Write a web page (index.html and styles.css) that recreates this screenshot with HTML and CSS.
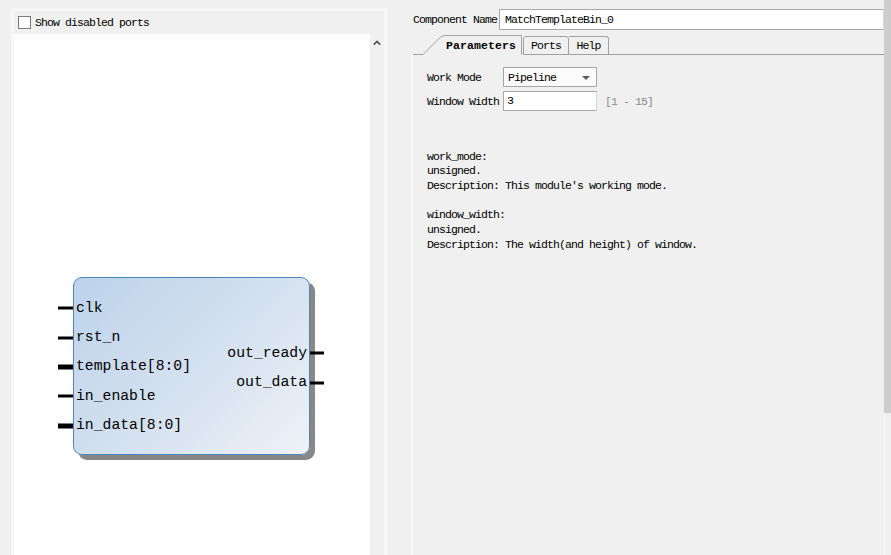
FILE: index.html
```html
<!DOCTYPE html>
<html>
<head>
<meta charset="utf-8">
<link rel="stylesheet" href="styles.css">
</head>
<body>
<div class="left-panel">
  <div class="lp-head">
    <span class="checkbox"></span>
    <span class="ui-text">Show disabled ports</span>
  </div>
  <div class="lp-body">
    <div class="canvas">
      <div class="symbol">
        <div class="ports-in">
          <div class="port pin-l">clk</div>
          <div class="port pin-l">rst_n</div>
          <div class="port pin-l bus">template[8:0]</div>
          <div class="port pin-l">in_enable</div>
          <div class="port pin-l bus">in_data[8:0]</div>
        </div>
        <div class="ports-out">
          <div class="port pin-r">out_ready</div>
          <div class="port pin-r">out_data</div>
        </div>
      </div>
    </div>
    <div class="vscroll">
      <svg class="caret" width="8" height="5" viewBox="0 0 8 5"><path d="M0.8 4.6 L4 1.4 L7.2 4.6" fill="none" stroke="#555" stroke-width="1.8"/></svg>
    </div>
  </div>
</div>

<div class="right-panel">
  <div class="name-row">
    <span class="name-label ui-text">Component Name</span>
    <div class="textbox name-box ui-text">MatchTemplateBin_0</div>
  </div>
  <div class="tabs">
    <div class="tab-lead"></div>
    <div class="tab-sel">
      <svg class="tab-shape" width="99" height="20" viewBox="0 0 99 20"><path d="M0 19.5 L16.5 3 Q18.8 0.5 22 0.5 L98.5 0.5 L98.5 19.6" fill="none" stroke="#a0a0a0" stroke-width="1"/></svg>
      <span class="tab-title">Parameters</span>
    </div>
    <div class="tab ui-text">Ports</div>
    <div class="tab ui-text">Help</div>
    <div class="tab-fill"></div>
  </div>
  <div class="pane">
    <div class="form">
      <span class="f-label ui-text">Work Mode</span>
      <div class="dropdown ui-text"><span>Pipeline</span><span class="arrow"></span></div>
      <span></span>
      <span class="f-label ui-text">Window Width</span>
      <div class="textbox small-box ui-text">3</div>
      <span class="range ui-text">[1 - 15]</span>
    </div>
    <div class="desc ui-text">work_mode:
unsigned.
Description: This module's working mode.

window_width:
unsigned.
Description: The width(and height) of window.</div>
  </div>
</div>

<div class="vbar"><div class="thumb"></div><div class="grip"></div></div>
</body>
</html>
```

FILE: styles.css
```css
html, body {
  margin: 0;
  padding: 0;
}
body {
  width: 891px;
  height: 555px;
  overflow: hidden;
  background: #f0f0f0;
  display: flex;
  color: #000;
}
.ui-text {
  font-family: "Liberation Mono", "DejaVu Sans Mono", monospace;
  font-size: 11.5px;
  letter-spacing: -0.9px;
  white-space: pre;
}

/* left panel */
.left-panel {
  margin: 8px 0 0 11px;
  width: 376px;
  box-sizing: border-box;
  border: 3px solid #f7f7f7;
  border-bottom: none;
  display: flex;
  flex-direction: column;
  background: #f0f0f0;
}
.lp-head {
  height: 23px;
  display: flex;
  align-items: center;
  padding-left: 4px;
  gap: 4px;
}
.checkbox {
  width: 13px;
  height: 13px;
  box-sizing: border-box;
  border: 1px solid #7a7a7a;
  background: #fff;
}
.lp-body {
  flex: 1;
  display: flex;
}
.canvas {
  width: 356px;
  background: #fff;
  position: relative;
}
.vscroll {
  width: 14px;
  display: flex;
  justify-content: center;
  align-items: flex-start;
  padding-top: 6px;
}

/* block symbol */
.symbol {
  position: absolute;
  left: 59px;
  top: 243px;
  width: 237px;
  height: 178px;
  box-sizing: border-box;
  border: 1px solid #4f84bb;
  border-radius: 9px;
  background: linear-gradient(135deg, #bcd3eb 0%, #d3e0ef 50%, #eef2f8 100%);
  box-shadow: 5px 5px 0 #878787;
  display: flex;
  justify-content: space-between;
}
.ports-in {
  padding-top: 15.7px;
  padding-left: 2px;
}
.ports-out {
  padding-top: 60.6px;
  padding-right: 2px;
  text-align: right;
}
.port {
  position: relative;
  height: 29.3px;
  line-height: 29.3px;
  font-family: "Liberation Mono", "DejaVu Sans Mono", monospace;
  font-size: 14.75px;
  white-space: pre;
}
.pin-l::before,
.pin-r::after {
  content: "";
  position: absolute;
  top: 50%;
  height: 3px;
  transform: translateY(-50%);
  background: #000;
}
.pin-l::before {
  left: -18px;
  width: 15px;
}
.pin-l.bus::before {
  height: 5px;
}
.pin-r::after {
  right: -17px;
  width: 14px;
}

/* right panel */
.right-panel {
  margin-left: 25px;
  flex: 1;
  display: flex;
  flex-direction: column;
}
.name-row {
  margin-top: 9px;
  height: 21px;
  display: flex;
  align-items: center;
  padding-left: 1px;
}
.name-label {
  width: 86px;
}
.textbox {
  box-sizing: border-box;
  height: 21px;
  border: 1px solid #a7a7a7;
  border-right-color: #d8d8d8;
  background: #fff;
  padding-left: 5px;
  line-height: 19px;
}
.name-box {
  flex: 1;
}
.tabs {
  margin-top: 5px;
  height: 20px;
  display: flex;
  align-items: flex-end;
  padding-left: 1px;
}
.tab-lead {
  width: 10px;
  border-bottom: 1px solid #a0a0a0;
}
.tab-sel {
  position: relative;
  width: 99px;
  height: 20px;
  display: flex;
  align-items: center;
  justify-content: center;
  padding-left: 17px;
  box-sizing: border-box;
}
.tab-shape {
  position: absolute;
  left: 0;
  top: 0;
}
.tab-title {
  position: relative;
  font-family: "Liberation Mono", "DejaVu Sans Mono", monospace;
  font-size: 11.5px;
  font-weight: bold;
  letter-spacing: 0.1px;
  padding-top: 1px;
}
.tab {
  box-sizing: border-box;
  height: 19px;
  border: 1px solid #a0a0a0;
  border-left: none;
  border-radius: 0 3px 0 0;
  display: flex;
  align-items: center;
  justify-content: center;
}
.tab:nth-of-type(3) {
  width: 46px;
  border-left: 1px solid #a0a0a0;
  border-radius: 3px 3px 0 0;
  margin-left: 1px;
}
.tab:nth-of-type(4) {
  width: 40px;
}
.tab-fill {
  flex: 1;
  border-bottom: 1px solid #a0a0a0;
}
.pane {
  flex: 1;
  margin-left: -1px;
  border-left: 2px solid #f8f8f8;
  padding: 12px 0 0 14px;
}
.form {
  display: grid;
  grid-template-columns: 76px 94px auto;
  grid-auto-rows: 20px;
  row-gap: 4px;
  align-items: center;
}
.dropdown {
  box-sizing: border-box;
  height: 20px;
  border: 1px solid #a6a6a6;
  background: #fbfbfb;
  display: flex;
  align-items: center;
  justify-content: space-between;
  padding: 0 6px 0 4px;
}
.arrow {
  width: 0;
  height: 0;
  border-left: 4px solid transparent;
  border-right: 4px solid transparent;
  border-top: 4px solid #5a5a5a;
  margin-top: 1px;
}
.small-box {
  height: 20px;
  line-height: 18px;
  padding-left: 3px;
}
.range {
  margin-left: 8px;
  color: #8a8a8a;
}
.desc {
  margin-top: 38.6px;
  line-height: 14.67px;
}

/* window scrollbar */
.vbar {
  width: 7px;
  background: #f0f0f0;
  border-left: 1px solid #fafafa;
  box-sizing: border-box;
  display: flex;
  flex-direction: column;
}
.thumb {
  height: 413px;
  background: #cdcdcd;
  margin-left: -1px;
}
.grip {
  margin-top: auto;
  height: 6px;
}
```
